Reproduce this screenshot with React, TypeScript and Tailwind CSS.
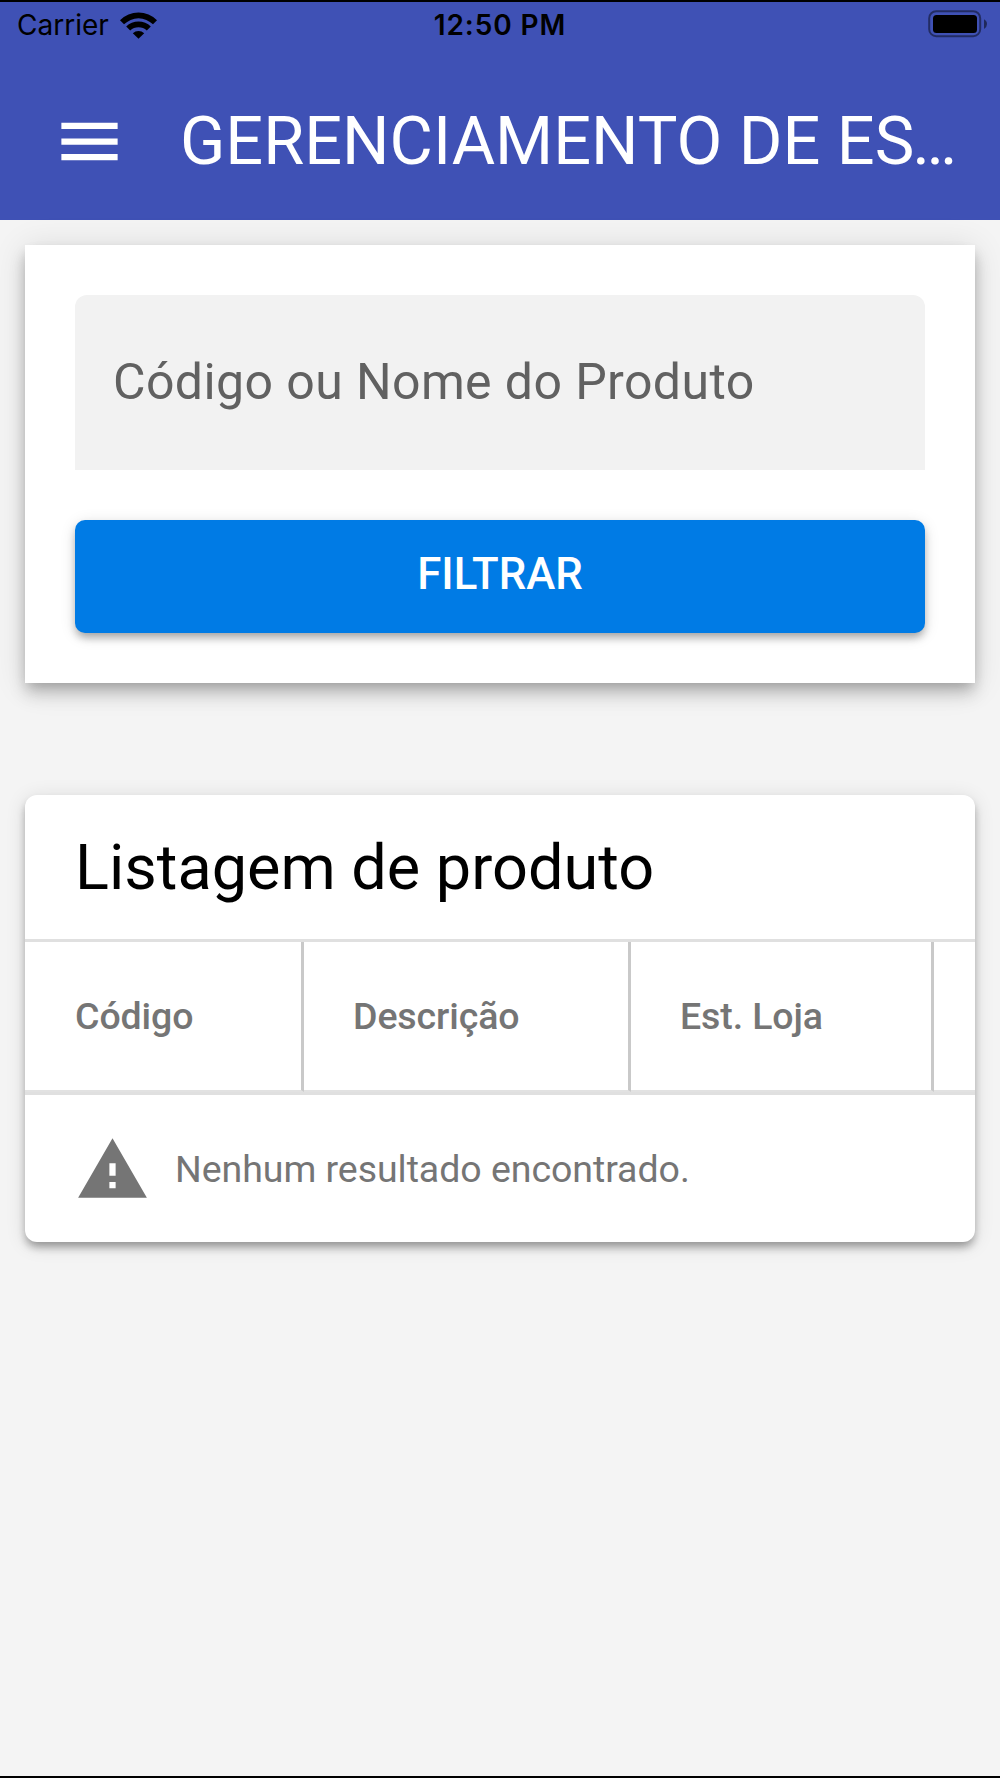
import { MdMenu, MdWarning } from 'react-icons/md'

const columns = [
  { label: 'Código', width: 'w-[279px]', padding: 'pl-[50px]' },
  { label: 'Descrição', width: 'w-[327px]', padding: 'pl-[49px]' },
  { label: 'Est. Loja', width: 'w-[303px]', padding: 'pl-[49px]' },
  { label: '', width: 'w-[100px]', padding: 'pl-[49px]' }
]

const WifiIcon = () => (
  <svg width="37" height="27" viewBox="0 0 37 27" fill="#000">
    <path d="M0 8.3A26 26 0 0 1 37 8.3L33 12.3A20.6 20.6 0 0 0 4 12.3Z" />
    <path d="M6.2 14.6A17.4 17.4 0 0 1 30.8 14.6L26.8 18.6A12 12 0 0 0 10.2 18.6Z" />
    <path d="M12.8 21.2A8.2 8.2 0 0 1 24.2 21.2L18.5 26.8Z" />
  </svg>
)

const BatteryIcon = () => (
  <svg width="60" height="28" viewBox="0 0 60 28">
    <rect x="1.2" y="1.2" width="51" height="25" rx="7" fill="none" stroke="#000" strokeOpacity="0.45" strokeWidth="2" />
    <rect x="5" y="5" width="44" height="18" rx="3.5" fill="#000" />
    <path d="M56 9.2Q59 10.8 59 14T56 19Z" fill="#000" fillOpacity="0.5" />
  </svg>
)

const StatusBar = () => (
  <div className="flex h-[46px] items-center pl-[17px] pr-[12px] font-['Inter',sans-serif] text-[28px] text-black">
    <div className="flex flex-1 items-center gap-[11px]">
      <span>Carrier</span>
      <WifiIcon />
    </div>
    <span className="mr-[5px] font-semibold tracking-[0.9px]">12:50 PM</span>
    <div className="flex flex-1 justify-end pb-[2px]">
      <BatteryIcon />
    </div>
  </div>
)

const App = () => {
  return (
    <div className="flex h-[1778px] w-[1000px] flex-col overflow-hidden border-y-2 border-black bg-[#f4f4f4] font-['Roboto',sans-serif]">
      <header className="h-[218px] shrink-0 bg-[#3f51b5]">
        <StatusBar />
        <div className="flex h-[172px] items-center pl-[52px] pt-[15px]">
          <MdMenu size={75} color="#fff" />
          <h1 className="ml-[53px] whitespace-nowrap text-[66.6px] text-white">
            GERENCIAMENTO DE ES<span className="-ml-[2px]">…</span>
          </h1>
        </div>
      </header>

      <div className="mx-[25px] mt-[25px] h-[438px] shrink-0 bg-white p-[50px] shadow-[0_6px_12px_-3px_rgba(0,0,0,0.2),0_12px_16px_0_rgba(0,0,0,0.14),0_3px_31px_0_rgba(0,0,0,0.12)]">
        <div className="flex h-[175px] items-center rounded-t-[12px] bg-[#f2f2f2] px-[38px] text-[50px] tracking-[0.4px] text-[#616161]">
          Código ou Nome do Produto
        </div>
        <button className="mt-[50px] flex h-[113px] w-full items-center justify-center rounded-[10px] bg-[#007be5] pb-[3px] text-[43.75px] font-medium text-white shadow-[0_6px_9px_-3px_rgba(0,0,0,0.2),0_5px_8px_0_rgba(0,0,0,0.14),0_3px_16px_0_rgba(0,0,0,0.12)]">
          FILTRAR
        </button>
      </div>

      <div className="mx-[25px] mt-[112px] h-[447px] shrink-0 rounded-[12px] bg-white shadow-[0_6px_9px_-3px_rgba(0,0,0,0.24),0_6px_9px_0_rgba(0,0,0,0.16),0_3px_20px_0_rgba(0,0,0,0.12)]">
        <h2 className="flex h-[144px] items-center px-[50px] pt-[2px] text-[63px] text-black">Listagem de produto</h2>
        <div className="flex h-[156px] overflow-hidden border-y-[3px] border-[#e0e0e0]">
          {columns.map((column, idx) => (
            <div
              key={idx}
              className={`${column.width} ${column.padding} flex shrink-0 items-center border-b-2 border-r-[3px] border-b-[#e2e2e2] border-r-[#c9c9c9] text-[37.5px] font-medium tracking-[-0.1px] text-[#757575]`}
            >
              {column.label}
            </div>
          ))}
        </div>
        <div className="flex h-[147px] items-center px-[50px] pt-[1px] text-[#757575]">
          <MdWarning size={75} />
          <span className="ml-[25px] text-[37.5px] tracking-[-0.05px]">Nenhum resultado encontrado.</span>
        </div>
      </div>
    </div>
  )
}

export default App
